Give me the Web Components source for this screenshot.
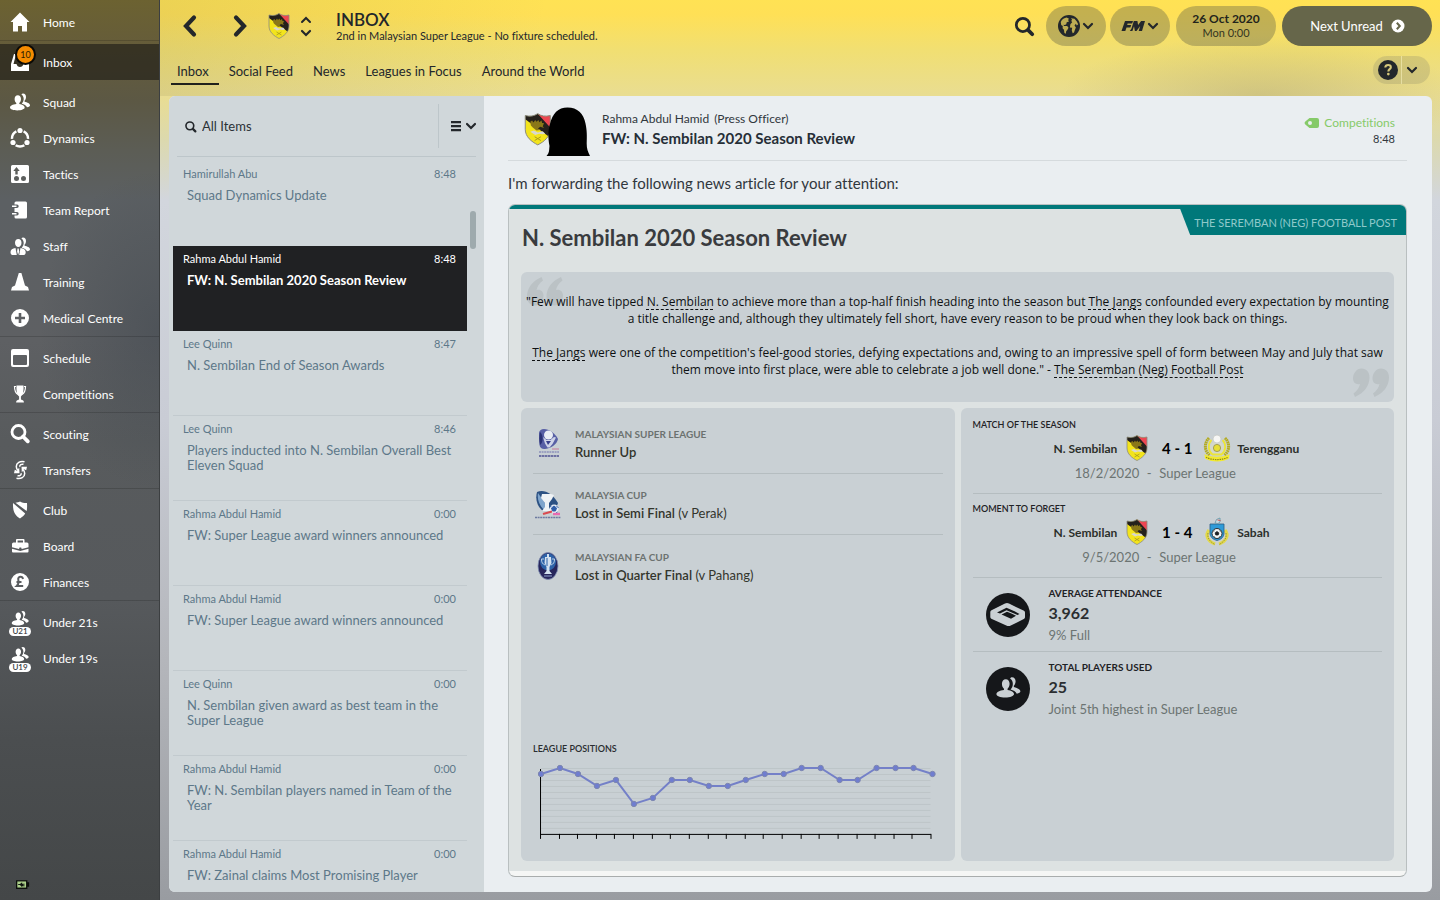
<!DOCTYPE html>
<html lang="en">
<head>
<meta charset="utf-8">
<meta name="viewport" content="width=device-width, initial-scale=1">
<title>Inbox</title>
<style>
  html, body { margin: 0; height: 100%; }
  body { font-family: Lato, "Open Sans", sans-serif; font-size: 12px; font-variant-ligatures: none; color: #23272b; background: #999ca1; overflow: hidden; }
</style>
</head>
<body>
<fm-app>
  <fm-sidebar slot="nav">
    <fm-nav-group>
      <fm-nav-item icon="home">Home</fm-nav-item>
    </fm-nav-group>
    <fm-nav-group>
      <fm-nav-item icon="inbox" active badge="10">Inbox</fm-nav-item>
    </fm-nav-group>
    <fm-nav-group plain>
      <fm-nav-item icon="squad">Squad</fm-nav-item>
      <fm-nav-item icon="dynamics">Dynamics</fm-nav-item>
      <fm-nav-item icon="tactics">Tactics</fm-nav-item>
      <fm-nav-item icon="report">Team Report</fm-nav-item>
      <fm-nav-item icon="staff">Staff</fm-nav-item>
      <fm-nav-item icon="training">Training</fm-nav-item>
      <fm-nav-item icon="medical">Medical Centre</fm-nav-item>
    </fm-nav-group>
    <fm-nav-group>
      <fm-nav-item icon="schedule">Schedule</fm-nav-item>
      <fm-nav-item icon="cup">Competitions</fm-nav-item>
    </fm-nav-group>
    <fm-nav-group>
      <fm-nav-item icon="scouting">Scouting</fm-nav-item>
      <fm-nav-item icon="transfers">Transfers</fm-nav-item>
    </fm-nav-group>
    <fm-nav-group>
      <fm-nav-item icon="club">Club</fm-nav-item>
      <fm-nav-item icon="board">Board</fm-nav-item>
      <fm-nav-item icon="finances">Finances</fm-nav-item>
    </fm-nav-group>
    <fm-nav-group>
      <fm-nav-item icon="youth" tag="U21">Under 21s</fm-nav-item>
      <fm-nav-item icon="youth" tag="U19">Under 19s</fm-nav-item>
    </fm-nav-group>
  </fm-sidebar>

  <fm-topbar slot="top">
    <span slot="title">INBOX</span>
    <span slot="subtitle">2nd in Malaysian Super League - No fixture scheduled.</span>
    <span slot="date">26 Oct 2020</span>
    <span slot="time">Mon 0:00</span>
    <span slot="action">Next Unread</span>
  </fm-topbar>

  <fm-tabs slot="tabs">
    <fm-tab active>Inbox</fm-tab>
    <fm-tab>Social Feed</fm-tab>
    <fm-tab>News</fm-tab>
    <fm-tab>Leagues in Focus</fm-tab>
    <fm-tab>Around the World</fm-tab>
  </fm-tabs>

  <fm-mail-list slot="list">
    <fm-mail-item>Hamirullah Abu<span slot="time">8:48</span><span slot="subject">Squad Dynamics Update</span></fm-mail-item>
    <fm-mail-item selected>Rahma Abdul Hamid<span slot="time">8:48</span><span slot="subject">FW: N. Sembilan 2020 Season Review</span></fm-mail-item>
    <fm-mail-item>Lee Quinn<span slot="time">8:47</span><span slot="subject">N. Sembilan End of Season Awards</span></fm-mail-item>
    <fm-mail-item>Lee Quinn<span slot="time">8:46</span><span slot="subject">Players inducted into N. Sembilan Overall Best Eleven Squad</span></fm-mail-item>
    <fm-mail-item>Rahma Abdul Hamid<span slot="time">0:00</span><span slot="subject">FW: Super League award winners announced</span></fm-mail-item>
    <fm-mail-item>Rahma Abdul Hamid<span slot="time">0:00</span><span slot="subject">FW: Super League award winners announced</span></fm-mail-item>
    <fm-mail-item>Lee Quinn<span slot="time">0:00</span><span slot="subject">N. Sembilan given award as best team in the Super League</span></fm-mail-item>
    <fm-mail-item>Rahma Abdul Hamid<span slot="time">0:00</span><span slot="subject">FW: N. Sembilan players named in Team of the Year</span></fm-mail-item>
    <fm-mail-item>Rahma Abdul Hamid<span slot="time">0:00</span><span slot="subject">FW: Zainal claims Most Promising Player</span></fm-mail-item>
  </fm-mail-list>

  <fm-message slot="message">
    <span slot="sender">Rahma Abdul Hamid</span>
    <span slot="role">(Press Officer)</span>
    <span slot="subject">FW: N. Sembilan 2020 Season Review</span>
    <span slot="category">Competitions</span>
    <span slot="time">8:48</span>
    <span slot="intro">I'm forwarding the following news article for your attention:</span>
    <fm-article>
      <span slot="source">THE SEREMBAN (NEG) FOOTBALL POST</span>
      <span slot="headline">N. Sembilan 2020 Season Review</span>
      <fm-quote slot="quote"></fm-quote>
      <fm-panel slot="left">
        <fm-result icon="league">MALAYSIAN SUPER LEAGUE<b slot="result">Runner Up</b></fm-result>
        <fm-result icon="malaysiacup">MALAYSIA CUP<b slot="result">Lost in Semi Final</b><span slot="opponent">(v Perak)</span></fm-result>
        <fm-result icon="facup" last>MALAYSIAN FA CUP<b slot="result">Lost in Quarter Final</b><span slot="opponent">(v Pahang)</span></fm-result>
        <fm-positions values="2,1,2,4,3,7,6,3,3,4,4,3,2,2,1,1,3,3,1,1,1,2">LEAGUE POSITIONS</fm-positions>
      </fm-panel>
      <fm-panel slot="right">
        <fm-match crest="terengganu">MATCH OF THE SEASON<span slot="home">N. Sembilan</span><span slot="score">4 - 1</span><span slot="away">Terengganu</span><span slot="date">18/2/2020</span><span slot="league">Super League</span></fm-match>
        <fm-match crest="sabah">MOMENT TO FORGET<span slot="home">N. Sembilan</span><span slot="score">1 - 4</span><span slot="away">Sabah</span><span slot="date">9/5/2020</span><span slot="league">Super League</span></fm-match>
        <fm-stat icon="stadium">AVERAGE ATTENDANCE<span slot="value">3,962</span><span slot="note">9% Full</span></fm-stat>
        <fm-stat icon="players" last>TOTAL PLAYERS USED<span slot="value">25</span><span slot="note">Joint 5th highest in Super League</span></fm-stat>
      </fm-panel>
    </fm-article>
  </fm-message>
</fm-app>

<script>
const people = `<path d="M15 3.500c1.900 0 3 1.500 3 3.400 0 1.500-.6 3-1.500 3.800l.1 1c2.700.7 5.400 1.700 5.400 3.600 0 1-1 1.700-3 2-.8-2-3-3-5.200-3.600 1.200-1.200 1.900-2.900 1.900-4.600 0-2-.8-3.600-2.300-4.600.4-.7 1-1 1.600-1z"/><path d="M9.800 5.200c1.900 0 3.200 1.600 3.200 3.800 0 1.800-.8 3.300-1.700 4.100v1c3 .5 5.400 1.600 5.400 3.500 0 1.600-3.200 2.900-7.400 2.900S2 19.300 2 17.600c0-1.900 2.800-3 6.300-3.500v-1C7.300 12.300 6.600 10.800 6.600 9c0-2.200 1.300-3.800 3.200-3.800z"/>`;
const shield = `<path d="M1 2c4 1 7 .5 10-1.500C14 2.500 17 3 21 2v11c0 6-5 10-10 12.500C6 23 1 19 1 13z"`;
const crest = `${shield} fill="#f3e41c"/><path d="M11 .5C14 2.500 17 3 21 2v13z" fill="#ee4652"/><path d="M1 2c4 1 7 .5 10-1.500l10 11V13c0 2-.6 3.800-1.500 5.500L1 5z" fill="#25211c"/><path d="m5 7 1.500-1 1 1.500L9 5.500l1 1.500 1.500-1.500.8 1.800L14 6l.5 2 1.500 0-1 2.500 1 1.500-3-1-2 1.500 2.500 1-3.500.5L7 11.500 5.500 10z" fill="#8a7718"/><path d="m5 15 3-1 3 1.500 4-1 2 2-2 .5-3-.5-3 1z" fill="#d7d7d2"/><path d="m8.500 22 5-3m-5 0 5 3" stroke="#a89c1d" stroke-width=".8"/>${shield} fill="none" stroke="#8b8b82" stroke-width=".8"/>`;
/* Icon artwork: [viewBox width, viewBox height, markup] */
const ICONS = {
  home: [24, 24, `<path d="M12 2.500 2.500 12H5v9.500h5V16h4v5.500h5V12h2.500z"/>`],
  inbox: [24, 24, `<path d="M6 4h12l3 10v7H3v-7zm1.600 2L5.500 14H8.500c.5 2 1.800 3 3.500 3s3-1 3.500-3h3L16.400 6z" fill-rule="evenodd"/>`],
  squad: [24, 24, people],
  dynamics: [24, 24, `<circle cx="12" cy="12.500" r="8" fill="none" stroke="currentColor" stroke-width="2.400" pathLength="360" stroke-dasharray="66 54" stroke-dashoffset="-57"/><circle cx="12" cy="4.500" r="2.600"/><circle cx="5" cy="16.500" r="2.600"/><circle cx="19" cy="16.500" r="2.600"/>`],
  tactics: [24, 24, `<path fill-rule="evenodd" d="M4.500 3h15A1.500 1.500 0 0 1 21 4.500v15a1.500 1.500 0 0 1-1.500 1.500h-15A1.500 1.500 0 0 1 3 19.500v-15A1.500 1.500 0 0 1 4.500 3zM8.500 5 5.300 9h2v3.500h2.400V9h2zM8.500 14a2.500 2.500 0 1 0 0 5 2.500 2.500 0 0 0 0-5zm7 0a2.500 2.500 0 1 0 0 5 2.500 2.500 0 0 0 0-5z"/>`],
  report: [24, 24, `<path d="M8 3.500h9.500A1.500 1.500 0 0 1 19 5v14a1.500 1.500 0 0 1-1.500 1.500H8a1.500 1.500 0 0 1-1.500-1.500v-1.500H9a1.700 1.700 0 0 0 0-3.400H6.500V10H9a1.700 1.700 0 0 0 0-3.400H6.500V5A1.500 1.500 0 0 1 8 3.500z"/><path d="M4 8.300h4.500M4 15.800h4.500" stroke="currentColor" stroke-width="1.400"/>`],
  staff: [24, 24, `<path d="M15 3.500c1.900 0 3 1.500 3 3.400 0 1.500-.6 3-1.500 3.800l.1 1c2.700.7 5.400 1.700 5.400 3.600 0 1-1 1.700-3 2-.8-2-3-3-5.200-3.600 1.200-1.200 1.900-2.900 1.900-4.600 0-2-.8-3.600-2.300-4.600.4-.7 1-1 1.600-1z"/><path d="M10.300 5c2 0 3.200 1.500 3.200 3.800 0 2.400-1.400 4.200-3.200 4.200S7 11.200 7 8.800C7 6.500 8.300 5 10.300 5zM7.500 14l1.300 7H4c-1-.5-1.500-1.500-1.500-3 0-2.500 2-3.500 5-4zm5 0-1.300 7h5c1-.5 1.500-1.500 1.500-3 0-2.500-2.200-3.500-5.200-4zm-3 .5h1.200l.5 3-1.100 3.500-1-3.500z"/>`],
  training: [24, 24, `<path d="M10.800 3h2.600l3.600 12.500 3 1.500 1 3.500H3L4 17l3-1.500z"/>`],
  medical: [24, 24, `<path fill-rule="evenodd" d="M12 3a9 9 0 1 0 0 18 9 9 0 0 0 0-18zm-1.300 4h2.600v3.700H17v2.600h-3.700V17h-2.600v-3.700H7v-2.600h3.700z"/>`],
  schedule: [24, 24, `<path fill-rule="evenodd" d="M5 3h14a2 2 0 0 1 2 2v14a2 2 0 0 1-2 2H5a2 2 0 0 1-2-2V5a2 2 0 0 1 2-2zm1 6a1 1 0 0 0-1 1v8a1 1 0 0 0 1 1h12a1 1 0 0 0 1-1v-8a1 1 0 0 0-1-1z"/>`],
  cup: [24, 24, `<path d="M8.500 3.500h7c.3 5.500-.5 9.500-2.600 11v3c2 .5 3 1.200 3 3H8.100c0-1.800 1-2.500 3-3v-3C9 13 8.200 9 8.500 3.500z"/><path d="M8 4.500H6.500c0 4 .8 6.500 3.500 8M16 4.500h1.500c0 4-.8 6.500-3.500 8" fill="none" stroke="currentColor" stroke-width="1.200"/>`],
  scouting: [24, 24, `<circle cx="10.500" cy="10" r="6.500" fill="none" stroke="currentColor" stroke-width="2.800"/><path d="m15 14.500 4.800 4.800" stroke="currentColor" stroke-width="3.800" stroke-linecap="round"/>`],
  transfers: [24, 24, `<path d="M16.500 3.800C12 2.800 8.300 4.800 8.300 8.500c0 1.500.5 2.700 1.500 3.800M15.500 6.300c-2.300-.5-3.700.4-3.800 2.400M8.500 20.200c4.500 1 8.200-1 8.200-4.700 0-1.500-.5-2.700-1.500-3.800M9.500 17.700c2.300.5 3.700-.4 3.800-2.400" fill="none" stroke="currentColor" stroke-width="1.500"/><path d="M6 15.300l.8-3.500 2.200 1 2.200-3.300.3 5.800zM19 8.700l-.8 3.500-2.200-1-2.200 3.300-.3-5.800z"/>`],
  club: [24, 24, `<path d="M7.500 4.700 18.600 13c.5-1.800.6-4.500.4-8-2.500.1-5-.3-7-1.500-1.300.8-2.800 1.100-4.500 1.200zM5 5c-.3 8 1.500 12 7 15.500 2.300-1.500 4-3 5.200-5z"/>`],
  board: [24, 24, `<path fill-rule="evenodd" d="M9 5h6.500a1 1 0 0 1 1 1v2.500H19a1.500 1.500 0 0 1 1.500 1.500v3.300L13.700 15l-.5-1.500h-1.700L11 15l-7-1.700V10a1.500 1.500 0 0 1 1.500-1.500H8V6a1 1 0 0 1 1-1zm.6 1.600v1.900H15V6.600z"/><path d="m4 14.800 8.300 2.300 8.200-2.300v2.700a1 1 0 0 1-1 1H5a1 1 0 0 1-1-1z"/>`],
  finances: [24, 24, `<path fill-rule="evenodd" d="M12 3a9 9 0 1 0 0 18 9 9 0 0 0 0-18z"/><path d="M15 9c-.3-1.600-1.200-2.200-2.400-2.200-1.700 0-2.700 1.200-2.300 3 .4 2 1 4-1.500 6.200h6.400M8.500 12h5" fill="none" stroke="#5a5d60" stroke-width="2"/>`],
  youth: [24, 24, `<g transform="translate(2 -2) scale(.85 .85)">${people}</g>`],
  back: [24, 24, `<path d="M16 3.500 8 12l8 8.500" fill="none" stroke="currentColor" stroke-width="4.200" stroke-linecap="round"/>`],
  forward: [24, 24, `<path d="m8 3.500 8 8.500-8 8.500" fill="none" stroke="currentColor" stroke-width="4.200" stroke-linecap="round"/>`],
  up: [12, 8, `<path d="m2 6 4-4 4 4" fill="none" stroke="currentColor" stroke-width="2" stroke-linecap="round"/>`],
  down: [12, 8, `<path d="m2 2 4 4 4-4" fill="none" stroke="currentColor" stroke-width="2.200" stroke-linecap="round"/>`],
  search: [20, 20, `<circle cx="9" cy="9" r="6" fill="none" stroke="currentColor" stroke-width="2.500"/><path d="m14 14 3.500 3.500" stroke="currentColor" stroke-width="3.400" stroke-linecap="round"/>`],
  menu: [12, 10, `<path d="M1 0h10v2.200H1zM1 4h10v2.200H1zM1 8h10v2.200H1z"/>`],
  globe: [24, 24, `<circle cx="12" cy="12" r="12"/><path fill="#bdac53" d="M3 7.500C4.500 4.500 7 3 9.500 2.700L12 4l-1 1.500 1 1.500-2.500 1L9 10l-1.500 1-1.500-.5.500 1.500h3.500l1.500 2-1.500 2.500-1 1-.5 3-1.500-1-.5-3.500-1.500-1.500.2-2.500L3.500 11zM14 3.500 18 4l2.500 3 1.500 3-1.500 1.500-1-2-1.500 2 1.500 2-1 2.500-1 3-1.500 1-1-3.500.5-2.500-2.500-.5L13.500 10l2-2-1-1.500.8-1.500z"/>`],
  fm: [24, 12, `<path d="M4 1h8L11.200 3.600H6.600l-.4 1.500h4L9.400 7.500H5.500L4.300 11H.5zM12.800 1h3.600l.7 4 3-4h3.900L21 11h-3.300l1.500-5-3.700 5h-1.600L13 6.200 11.400 11H8.800L10.500 8.500z"/>`],
  go: [16, 16, `<circle cx="8" cy="8" r="6.500"/><path d="m6.800 4.800 3 3.200-3 3.200" fill="none" stroke="#66664a" stroke-width="2"/>`],
  help: [24, 24, `<circle cx="12" cy="12" r="12"/><path d="M8.700 9c.2-2 1.500-3 3.400-3s3.300 1 3.300 2.700c0 2.300-3 2.300-3 5" fill="none" stroke="#d5c77b" stroke-width="2.500"/><circle cx="12.400" cy="16.900" r="1.600" fill="#d5c77b"/>`],
  tag: [16, 12, `<path fill-rule="evenodd" d="M5.500 1H13a2 2 0 0 1 2 2v6a2 2 0 0 1-2 2H5.500L1.300 7.500a2 2 0 0 1 0-3zM6 4a2 2 0 1 0 0 4 2 2 0 0 0 0-4z"/>`],
  battery: [16, 10, `<path fill="#0c0f0c" d="M0 0h13v2.500h2v5h-2V10H0z"/><path fill="#acd08a" d="M1.500 1.500h10v7h-10z"/><path fill="#101510" d="M2.500 4.500h2L7 2.500V4h3v1H8.500v1H10v1H7v1.200L4.500 5.700h-2z"/>`],
  crest: [22, 26, crest],
  portrait: [70, 52, `<g transform="translate(2 8) scale(1.250 1.250)">${crest}</g><path fill="#000" d="M45.500 2.500c10 0 16 6 18 16 1.500 7 1.500 12 1.200 20 0 5 1 8 3.300 12.500H24.500c3-3 2.500-6 3-10-1.500-8-1.500-16 .5-22C30.500 8.500 36 2.500 45.500 2.500z"/>`],
  league: [24, 30, `<path d="M3 5c0-2 2-4 5-4 5 0 11 4 14 10-1 5-6 9-13 10-3 .3-5-1-5.500-4z" fill="#575fa5"/><path d="M4 4c3 2 4 10 0 13-1-4-1-9 0-13z" fill="#2b3276"/><circle cx="12.500" cy="7" r="4.500" fill="#e9edf4"/><path d="m7 9 3.500 3h4L18 9l2 .500-3.500 6.500-3 3.500-2 0-2.500-4z" fill="#cfd4e8"/><path d="m10 13 2 4 3-4z" fill="#39408c"/><path d="M3 24h20" stroke="#8d91bb" stroke-width="1.600" stroke-dasharray="2 .6"/><path d="M3 28h20" stroke="#6e71a3" stroke-width="2" stroke-dasharray="2.500 .5"/><path d="M16 21h7" stroke="#c77a9d"/>`],
  malaysiacup: [28, 30, `<path d="M3 3c7-3 15 1 21 11l-3 8H9C3 18 1 10 3 3z" fill="#2c5183"/><path d="M4 4c-1 6 1 12 6 17l5 1-4-8z" fill="#7fa5cc"/><path d="M8 5h9l3 1-2 4-3 4v5l3 3H8l3-4v-4L7 9z" fill="#eef2f5"/><circle cx="20" cy="20" r="4.500" fill="#e9eef6"/><path d="m20 17 2.500 2-1 3h-3l-1-3zm-4 1 1.500-1m5 0 2 2m-1 4-2 1.500" fill="#2f5da8" stroke="#2f5da8"/><path d="m9 25 9-2.500" stroke="#d94b50" stroke-width="2.200"/><path d="M19 25h7" stroke="#e76bb0" stroke-width="2.400"/><path d="M1 28.500h26" stroke="#6d7aa0" stroke-width="1.600" stroke-dasharray="2 .6"/>`],
  facup: [22, 30, `<ellipse cx="11" cy="15" rx="10" ry="13.500" fill="#27265c" stroke="#8190b5" stroke-width=".8"/><ellipse cx="11" cy="11" rx="8" ry="8.500" fill="#2d62a8"/><path d="M8 6h6l.5 6-2 4v4l2.500 3H7l2.500-3v-4l-2-4zM10 3h2v3h-2z" fill="#d3e1f0"/><path d="M7 8H4.500c0 3.500 1 5 3.500 6M15 8h2.500c0 3.500-1 5-3.500 6" fill="none" stroke="#bcd0e6"/><path d="M10 7v8" stroke="#2d62a8"/><path d="M7 25h8" stroke="#8da0cc"/>`],
  terengganu: [28, 28, `<circle cx="14" cy="14" r="7" fill="#d5d8c8"/><path d="M6 4c-5 5-5 13 1 17.500M22 4c5 5 5 13-1 17.500" fill="none" stroke="#b3ab22" stroke-width="3" stroke-dasharray="1.700 .5"/><path d="M8.500 6C4.500 10 5 17 9.500 20.500h9C23 17 23.500 10 19.500 6" fill="none" stroke="#ece536" stroke-width="1.800"/><circle cx="14" cy="14" r="3.600" fill="#e7df35" stroke="#8b8740" stroke-width=".7"/><circle cx="14" cy="5" r="4" fill="#f6f6f4" stroke="#c2c4c0" stroke-width=".7"/><path d="M1.500 20c4 3.500 21 3.500 25 0l-.5 4.500c-6 4-18 4-24 0z" fill="#f2ea2e"/><path d="M3 23.300c6 3 16 3 22 0" stroke="#908918" fill="none" stroke-width="1.200" stroke-dasharray="1.500 .8"/>`],
  sabah: [24, 28, `<path d="M4 12c-4 5-2 11 6 14M20 12c4 5 2 11-6 14" fill="none" stroke="#e3d94a" stroke-width="3.200"/><path d="M3 15c-1 5 2 9 7 11.500M21 15c1 5-2 9-7 11.500" fill="none" stroke="#8f8c35" stroke-width=".9" stroke-dasharray="1.500 1"/><path d="M5 6h14v9c0 4-3 6.500-7 7.500-4-1-7-3.500-7-7.500z" fill="#2f9bd8" stroke="#2b5d83" stroke-width=".8"/><circle cx="12" cy="15.500" r="5" fill="#f4f6f6" stroke="#2a2d30"/><path d="m12 13.500 1.900 1.400-.7 2.100h-2.400l-.7-2.100zM8.500 13.500l1-.7M15.500 13.500l-1-.7M9.500 18.500l.7.7M14.500 18.500l-.7.700" fill="#1c1f22" stroke="#1c1f22" stroke-width=".8"/><path d="m10 5 1.500-3.500L15 0v4l-2 1.500z" fill="#c9dbe2" stroke="#5e94a6" stroke-width=".8"/><path d="m12.500 2 3 .500" stroke="#cf5555"/>`],
  stadium: [44, 44, `<circle cx="22" cy="22" r="22" fill="#15171a"/><path fill="#cad0d4" d="M19 10.500 5.500 17.200a2 2 0 0 0-1.200 1.800v5a2 2 0 0 0 1 1.700l15 6.800c1.500.7 3 .7 4.500 0l13-6.500a2 2 0 0 0 1.200-1.800V19.500a2 2 0 0 0-1-1.700L23 10.500a4.500 4.500 0 0 0-4 0z"/><path fill="#15171a" d="M11 19.500 20.500 14.700l4 1.700c4 1.500 6 3 9 4.500l-2 1.100-11-4.800-6.500 3.200z"/><path fill="#15171a" d="M15.500 21.500 21 18.700l5 2 4 2-5 3z"/>`],
  players: [44, 44, `<circle cx="22" cy="22" r="22" fill="#15171a"/><g transform="translate(8 6) scale(1.200)" fill="#cad0d4">${people}</g>`],
  quote: [36, 29, `<path d="M14.500 0 16 3.500C12 6.500 10 10 9.500 13c4-1 7 1.500 7 5.500 0 5-3.500 10-8.500 10S0 25 0 19.500C0 11 5.500 4 14.500 0zM34 0l1.500 3.500c-4 3-6 6.500-6.500 9.500 4-1 7 1.500 7 5.500 0 5-3.500 10-8.500 10s-8-3.500-8-9C19.500 11 25 4 34 0z"/>`]
};

const RESET = `
  *, *::before, *::after, :host { box-sizing: border-box; }
  a { color: inherit; text-decoration: none; }
  button { font: inherit; color: inherit; border: 0; padding: 0; margin: 0; background: none; display: flex; align-items: center; justify-content: center; cursor: pointer; }
`;
function define(tag, css, html, setup) {
  const template = document.createElement('template');
  template.innerHTML = `<style>${RESET}${css}</style>${html}`;
  customElements.define(tag, class extends HTMLElement {
    constructor() {
      super();
      this.attachShadow({ mode: 'open' }).append(template.content.cloneNode(true));
    }
    connectedCallback() { if (setup) setup(this, this.shadowRoot); }
  });
}
function makeIcon(name) {
  const icon = document.createElement('fm-icon');
  icon.setAttribute('name', name);
  return icon;
}

define('fm-icon', `:host { display: block; flex: none; line-height: 0; } svg { display: block; overflow: visible; fill: currentColor; }`, `<svg aria-hidden="true"></svg>`, (el, root) => {
  const [w, h, art] = ICONS[el.getAttribute('name')];
  const svg = root.querySelector('svg');
  const width = Number(el.getAttribute('size') || w);
  svg.setAttribute('viewBox', `0 0 ${w} ${h}`);
  svg.setAttribute('width', width);
  svg.setAttribute('height', Math.round(width * h / w));
  svg.innerHTML = art;
});

define('fm-app', `
  :host { display: grid; grid-template-columns: 160px minmax(0, 1fr); height: 100vh; }
  main { display: flex; flex-direction: column; min-width: 0; min-height: 0; padding: 0 8px 8px 9px;
    background:
      radial-gradient(ellipse 200px 60px at 86% 96px, rgba(160,150,100,.35), transparent),
      linear-gradient(100deg, rgba(150,140,80,.18) 0, rgba(150,140,80,0) 30%) 0 0 / 100% 96px no-repeat,
      linear-gradient(180deg, #ffe254 0, #ffe056 14px, #f1df72 50px, #e9dd92 96px, #dcd9ae 140px, #d2d6dd 200px, #c9ccd5 420px, #b4b6bb 660px, #999ca1 100%); }
  .panel { flex: 1; min-height: 0; display: grid; grid-template-columns: 315px minmax(0, 1fr); border-radius: 6px; overflow: hidden; background: #eaeef1; }
  slot[name=list]::slotted(*), slot[name=message]::slotted(*) { min-height: 0; }
`, `<slot name="nav"></slot><main><slot name="top"></slot><slot name="tabs"></slot><div class="panel"><slot name="list"></slot><slot name="message"></slot></div></main>`);

define('fm-sidebar', `
  :host { display: flex; flex-direction: column; color: #fff; border-right: 1px solid #3c3f41; min-height: 0;
    background: radial-gradient(ellipse 120px 160px at 100% 330px, rgba(50,60,70,.35), transparent),
      linear-gradient(180deg, #6c6231 0, #665d39 40px, #5c5844 100px, #5c5d55 150px, #5c6063 200px, #5e6063 340px, #585b5d 440px, #56595c 600px, #4b4e50 740px, #444748 900px); }
  nav { flex: 1; }
  footer { padding: 0 0 11px 16px; }
`, `<nav><slot></slot></nav><footer><fm-icon name="battery" size="14"></fm-icon></footer>`);

define('fm-nav-group', `
  :host { display: block; padding-top: 4px; background: linear-gradient(rgba(0,0,0,.16), rgba(0,0,0,.16)) 0 0 / 100% 1px no-repeat; }
  :host([plain]), :host(:first-child) { background: none; }
`, `<slot></slot>`);

define('fm-nav-item', `
  :host { display: block; }
  a { position: relative; display: flex; align-items: center; gap: 11px; height: 36px; padding-left: 8px; }
  :host([active]) a { background: rgba(25,24,20,.6); }
  .badge { position: absolute; left: 15px; top: 0; width: 21px; height: 21px; border-radius: 50%; background: #f58b00; border: 2px solid #0b0a06; color: #2b1c00; font-size: 9px; line-height: 17px; text-align: center; }
  .tag { position: absolute; left: 9px; bottom: 4px; width: 22px; height: 9px; border-radius: 5px; background: #fff; color: #3a3d3f; font-size: 8px; font-weight: 600; line-height: 9px; text-align: center; }
`, `<a href="#"><span class="label"><slot></slot></span></a>`, (el, root) => {
  const a = root.querySelector('a');
  a.prepend(makeIcon(el.getAttribute('icon')));
  for (const kind of ['badge', 'tag']) {
    if (!el.hasAttribute(kind)) continue;
    const mark = document.createElement('span');
    mark.className = kind;
    mark.textContent = el.getAttribute(kind);
    a.append(mark);
  }
});

define('fm-topbar', `
  :host { display: flex; align-items: center; height: 52px; padding-left: 9px; gap: 24px; }
  .steps { display: flex; flex-direction: column; gap: 5px; }
  .steps button { height: 8px; }
  .nav { display: flex; align-items: center; }
  .history { height: 32px; width: 24px; }
  .history:first-child { margin-right: 26px; }
  .crest { margin: 0 10px 0 16px; }
  .titles { flex: 1; min-width: 0; padding-top: 2px; }
  h1 { margin: 0; font-size: 17px; font-weight: 600; line-height: 18px; }
  p { margin: 0; font-size: 11px; line-height: 14px; }
  .tools { display: flex; align-items: center; gap: 4px; }
  .tools > * { flex: none; }
  .search { width: 22px; margin-right: 7px; }
  .pill { width: 60px; height: 40px; border-radius: 20px; background: rgba(98,96,70,.38); gap: 2px; }
  .date { width: 100px; flex-direction: column; margin: 0 2px; line-height: 14px; font-size: 11px; gap: 0; color: #33331f; }
  .date b { font-weight: 700; font-size: 12px; color: #22241c; }
  .next { width: 150px; background: #66664a; color: #fff; font-size: 13px; gap: 7px; padding-left: 2px; }
`, `
  <div class="nav">
    <button class="history" aria-label="Back"><fm-icon name="back"></fm-icon></button>
    <button class="history" aria-label="Forward"><fm-icon name="forward"></fm-icon></button>
    <fm-icon class="crest" name="crest"></fm-icon>
    <div class="steps"><button aria-label="Previous"><fm-icon name="up"></fm-icon></button><button aria-label="Next"><fm-icon name="down"></fm-icon></button></div>
  </div>
  <div class="titles"><h1><slot name="title"></slot></h1><p><slot name="subtitle"></slot></p></div>
  <div class="tools">
    <button class="search" aria-label="Search"><fm-icon name="search" size="22"></fm-icon></button>
    <button class="pill" aria-label="World"><fm-icon name="globe" size="22"></fm-icon><fm-icon name="down"></fm-icon></button>
    <button class="pill" aria-label="FM menu"><fm-icon name="fm"></fm-icon><fm-icon name="down"></fm-icon></button>
    <button class="pill date"><b><slot name="date"></slot></b><slot name="time"></slot></button>
    <button class="pill next"><slot name="action"></slot><fm-icon name="go"></fm-icon></button>
  </div>`);

define('fm-tabs', `
  :host { display: flex; align-items: flex-start; justify-content: space-between; height: 44px; padding: 4px 2px 0; }
  nav { display: flex; gap: 8px; padding-top: 6px; }
  .help { display: flex; height: 28px; border-radius: 14px; background: rgba(150,145,110,.3); }
  .help button { width: 28px; padding-left: 2px; }
  .help button + button { border-left: 1px solid rgba(255,250,200,.5); padding: 0 9px 0 0; width: 29px; }
`, `<nav><slot></slot></nav><div class="help"><button aria-label="Help"><fm-icon name="help" size="20"></fm-icon></button><button aria-label="Help menu"><fm-icon name="down"></fm-icon></button></div>`);

define('fm-tab', `
  :host { display: block; }
  a { display: block; padding: 0 6px 3px; font-size: 13px; line-height: 18px; border-bottom: 2px solid transparent; }
  :host([active]) a { border-color: #20211c; padding-right: 10px; margin-right: -4px; }
`, `<a href="#"><slot></slot></a>`);

define('fm-mail-list', `
  :host { display: flex; flex-direction: column; background: #d0d7da; overflow: hidden; }
  .filter { display: flex; align-items: center; height: 61px; margin: 0 8px; border-bottom: 1px solid #bdc6ca; flex: none; }
  label { flex: 1; display: flex; align-items: center; gap: 5px; min-width: 0; padding-left: 7px; }
  input { flex: 1; min-width: 0; border: 0; background: none; padding: 0; font: inherit; font-size: 13px; color: #2b3136; outline: 0; }
  .menu { height: 44px; width: 38px; border-left: 1px solid #bdc6ca; gap: 3px; padding-left: 12px; }
  .scroll { flex: 1; min-height: 0; display: flex; padding: 4px 8px 0 4px; gap: 3px; }
  .items { flex: 1; min-width: 0; overflow: hidden; }
  .track { width: 6px; padding-top: 50px; }
  .thumb { height: 38px; border-radius: 3px; background: #9eaaad; }
`, `
  <div class="filter"><label><fm-icon name="search" size="13"></fm-icon><input type="text" value="All Items" aria-label="Filter items"></label>
  <button class="menu" aria-label="List options"><fm-icon name="menu"></fm-icon><fm-icon name="down"></fm-icon></button></div>
  <div class="scroll"><div class="items"><slot></slot></div><div class="track"><div class="thumb"></div></div></div>`);

define('fm-mail-item', `
  :host { display: block; color: #5d7889; }
  a { display: block; height: 85px; padding: 5px 11px 0 10px; border-bottom: 1px solid #c2cace; }
  .meta { display: flex; justify-content: space-between; font-size: 11px; line-height: 16px; }
  .subject { margin-top: 6px; padding-left: 4px; font-size: 13px; line-height: 15px; }
  :host([selected]) { color: #fff; }
  :host([selected]) a { background: #202123; border-color: #202123; }
  :host([selected]) .subject { font-weight: 700; }
  :host(:first-child) a { border-color: transparent; }
`, `<a href="#"><div class="meta"><span><slot></slot></span><slot name="time"></slot></div><div class="subject"><slot name="subject"></slot></div></a>`);

define('fm-message', `
  :host { display: flex; flex-direction: column; padding: 0 25px 15px 24px; color: #31373d; }
  header { display: flex; align-items: center; height: 65px; flex: none; border-bottom: 1px solid #d5dadd; padding: 6px 12px 0 14px; gap: 10px; }
  .text { flex: 1; min-width: 0; padding-bottom: 2px; }
  .from { font-size: 12px; line-height: 16px; display: flex; gap: 5px; }
  h2 { margin: 0; font-size: 15px; font-weight: 700; line-height: 22px; color: #262e37; }
  .meta { text-align: right; line-height: 16px; padding-bottom: 1px; font-size: 11px; }
  .category { display: flex; align-items: center; gap: 4px; color: #86ca69; font-size: 12px; }
  p { margin: 12px 0; font-size: 15px; line-height: 20px; flex: none; }
`, `
  <header><fm-icon name="portrait"></fm-icon>
    <div class="text"><div class="from"><slot name="sender"></slot><slot name="role"></slot></div><h2><slot name="subject"></slot></h2></div>
    <div class="meta"><div class="category"><fm-icon name="tag"></fm-icon><slot name="category"></slot></div><slot name="time"></slot></div>
  </header>
  <p><slot name="intro"></slot></p><slot></slot>`);

define('fm-article', `
  :host { display: flex; flex-direction: column; flex: 1; min-height: 0; border: 1px solid #b9bfc0; border-bottom-color: #a9adad; border-radius: 7px; overflow: hidden; background: #f5f6f5; padding-bottom: 5px; margin-top: -1px; }
  article { flex: 1; min-height: 0; display: flex; flex-direction: column; background: #dde2e2; border-top: 4px solid #00787a; padding: 0 12px 10px; position: relative; }
  .source { position: absolute; right: 0; top: 0; padding: 0 9px 0 14px; height: 26px; line-height: 27px; font-size: 11px; color: #8fc9ca; background: #00787a; clip-path: polygon(0 0, 100% 0, 100% 100%, 10px 100%); }
  h3 { margin: 0 0 20px; padding: 14px 1px 0; font-size: 22px; line-height: 29px; font-weight: 700; color: #393b3e; flex: none; }
  .columns { flex: 1; min-height: 0; display: grid; grid-template-columns: 1fr 1fr; gap: 6px; margin-top: 6px; }
`, `<article><div class="source"><slot name="source"></slot></div><h3><slot name="headline"></slot></h3><slot name="quote"></slot><div class="columns"><slot name="left"></slot><slot name="right"></slot></div></article>`);

define('fm-quote', `
  :host { display: block; position: relative; flex: none; border-radius: 6px; background: #c9d0d4; padding: 21px 4px 24px; text-align: center; color: #0e1012; font-family: "Open Sans", Lato, sans-serif; font-size: 12px; line-height: 17px; }
  p { margin: 0 0 17px; position: relative; }
  p:last-child { margin: 0; }
  a { text-decoration: underline dashed 1px; text-underline-offset: 3px; }
  .open, .close { position: absolute; color: #bbc2c5; }
  .open { left: 6px; top: 5px; }
  .close { right: 5px; bottom: 5px; rotate: 180deg; }
`, `
  <fm-icon class="open" name="quote"></fm-icon><fm-icon class="close" name="quote"></fm-icon>
  <p>"Few will have tipped <a href="#">N. Sembilan</a> to achieve more than a top-half finish heading into the season but <a href="#">The Jangs</a> confounded every expectation by mounting<br>a title challenge and, although they ultimately fell short, have every reason to be proud when they look back on things.</p>
  <p><a href="#">The Jangs</a> were one of the competition's feel-good stories, defying expectations and, owing to an impressive spell of form between May and July that saw<br>them move into first place, were able to celebrate a job well done." - <a href="#">The Seremban (Neg) Football Post</a></p>`);

define('fm-panel', `:host { display: flex; flex-direction: column; min-width: 0; border-radius: 6px; background: #c9d0d4; padding: 2px 12px; }`, `<slot></slot>`);

define('fm-result', `
  :host { display: grid; grid-template-columns: 30px 1fr; align-items: center; gap: 12px; height: 61px; flex: none; border-bottom: 1px solid #b5bdc0; }
  :host(:first-child) { margin-top: 3px; }
  :host([last]) { border-bottom: 0; }
  fm-icon { justify-self: center; }
  .name { font-size: 10px; font-weight: 700; line-height: 18px; color: #6c7270; }
  .result { font-size: 13px; line-height: 18px; color: #33352c; }
  ::slotted(b) { font-weight: 600; }
`, `<div class="body"><div class="name"><slot></slot></div><div class="result"><slot name="result"></slot> <slot name="opponent"></slot></div></div>`, (el, root) => {
  root.querySelector('.body').before(makeIcon(el.getAttribute('icon')));
});

define('fm-positions', `
  :host { display: block; margin-top: auto; padding-bottom: 19px; font-size: 9px; font-weight: 600; line-height: 14px; color: #2a2d30; }
  svg { display: block; width: 100%; height: auto; margin-top: 4px; overflow: visible; }
`, `<slot></slot><svg viewBox="0 0 410 80" role="img" aria-label="League positions by match"></svg>`, (el, root) => {
  const values = el.getAttribute('values').split(',').map(Number);
  const left = 8, top = 8, step = 392 / (values.length - 1);
  const x = i => Math.round(left + i * step);
  let art = '';
  for (let line = 0; line < 11; line++) art += `<path d="M${left} ${top + .5 + line * 6}H398" stroke="#bec5c8"/>`;
  art += `<path d="M7.500 9V74.500H398.500" fill="none" stroke="#000"/>`;
  values.forEach((v, i) => { art += `<path d="M${Math.round(7 + i * 391 / (values.length - 1)) + .5} 74v5" stroke="#000"/>`; });
  art += `<polyline points="${values.map((v, i) => `${x(i)},${top + (v - 1) * 6}`).join(' ')}" fill="none" stroke="#7480c8" stroke-width="2"/>`;
  values.forEach((v, i) => { art += `<circle cx="${x(i)}" cy="${top + (v - 1) * 6}" r="2.700" fill="#6f7dd0" stroke="#7c86ae"/>`; });
  root.querySelector('svg').innerHTML = art;
});

define('fm-match', `
  :host { display: block; flex: none; padding: 8px 0 11px; border-bottom: 1px solid #b5bdc0; }
  .heading { font-size: 9px; font-weight: 600; line-height: 14px; color: #1f2225; }
  .teams { display: grid; grid-template-columns: 1fr 40px 40px 40px 1fr; align-items: center; justify-items: center; height: 32px; font-size: 12px; font-weight: 700; color: #2c2f2b; }
  .home { justify-self: end; }
  .away { justify-self: start; }
  .score { font-size: 15px; font-weight: 700; color: #000; white-space: nowrap; }
  .when { display: grid; grid-template-columns: 1fr 20px 1fr; padding-right: 56px; text-align: center; font-size: 13px; line-height: 18px; color: #6c7472; }
  .date { text-align: right; }
  .league { text-align: left; }
`, `<div class="heading"><slot></slot></div>
  <div class="teams"><span class="home"><slot name="home"></slot></span><fm-icon name="crest"></fm-icon><span class="score"><slot name="score"></slot></span><span class="away"><slot name="away"></slot></span></div>
  <div class="when"><span class="date"><slot name="date"></slot></span><span>-</span><span class="league"><slot name="league"></slot></span></div>`, (el, root) => {
  root.querySelector('.away').before(makeIcon(el.getAttribute('crest')));
});

define('fm-stat', `
  :host { display: flex; align-items: center; flex: none; gap: 19px; height: 74px; padding-left: 13px; border-bottom: 1px solid #b5bdc0; }
  :host([last]) { border-color: transparent; }
  .heading { font-size: 10px; font-weight: 700; line-height: 16px; color: #1f2225; }
  .value { font-size: 16px; font-weight: 700; line-height: 24px; color: #2b2e31; }
  .note { font-size: 13px; line-height: 20px; color: #6c7472; }
`, `<div class="body"><div class="heading"><slot></slot></div><div class="value"><slot name="value"></slot></div><div class="note"><slot name="note"></slot></div></div>`, (el, root) => {
  root.querySelector('.body').before(makeIcon(el.getAttribute('icon')));
});
</script>
</body>
</html>
